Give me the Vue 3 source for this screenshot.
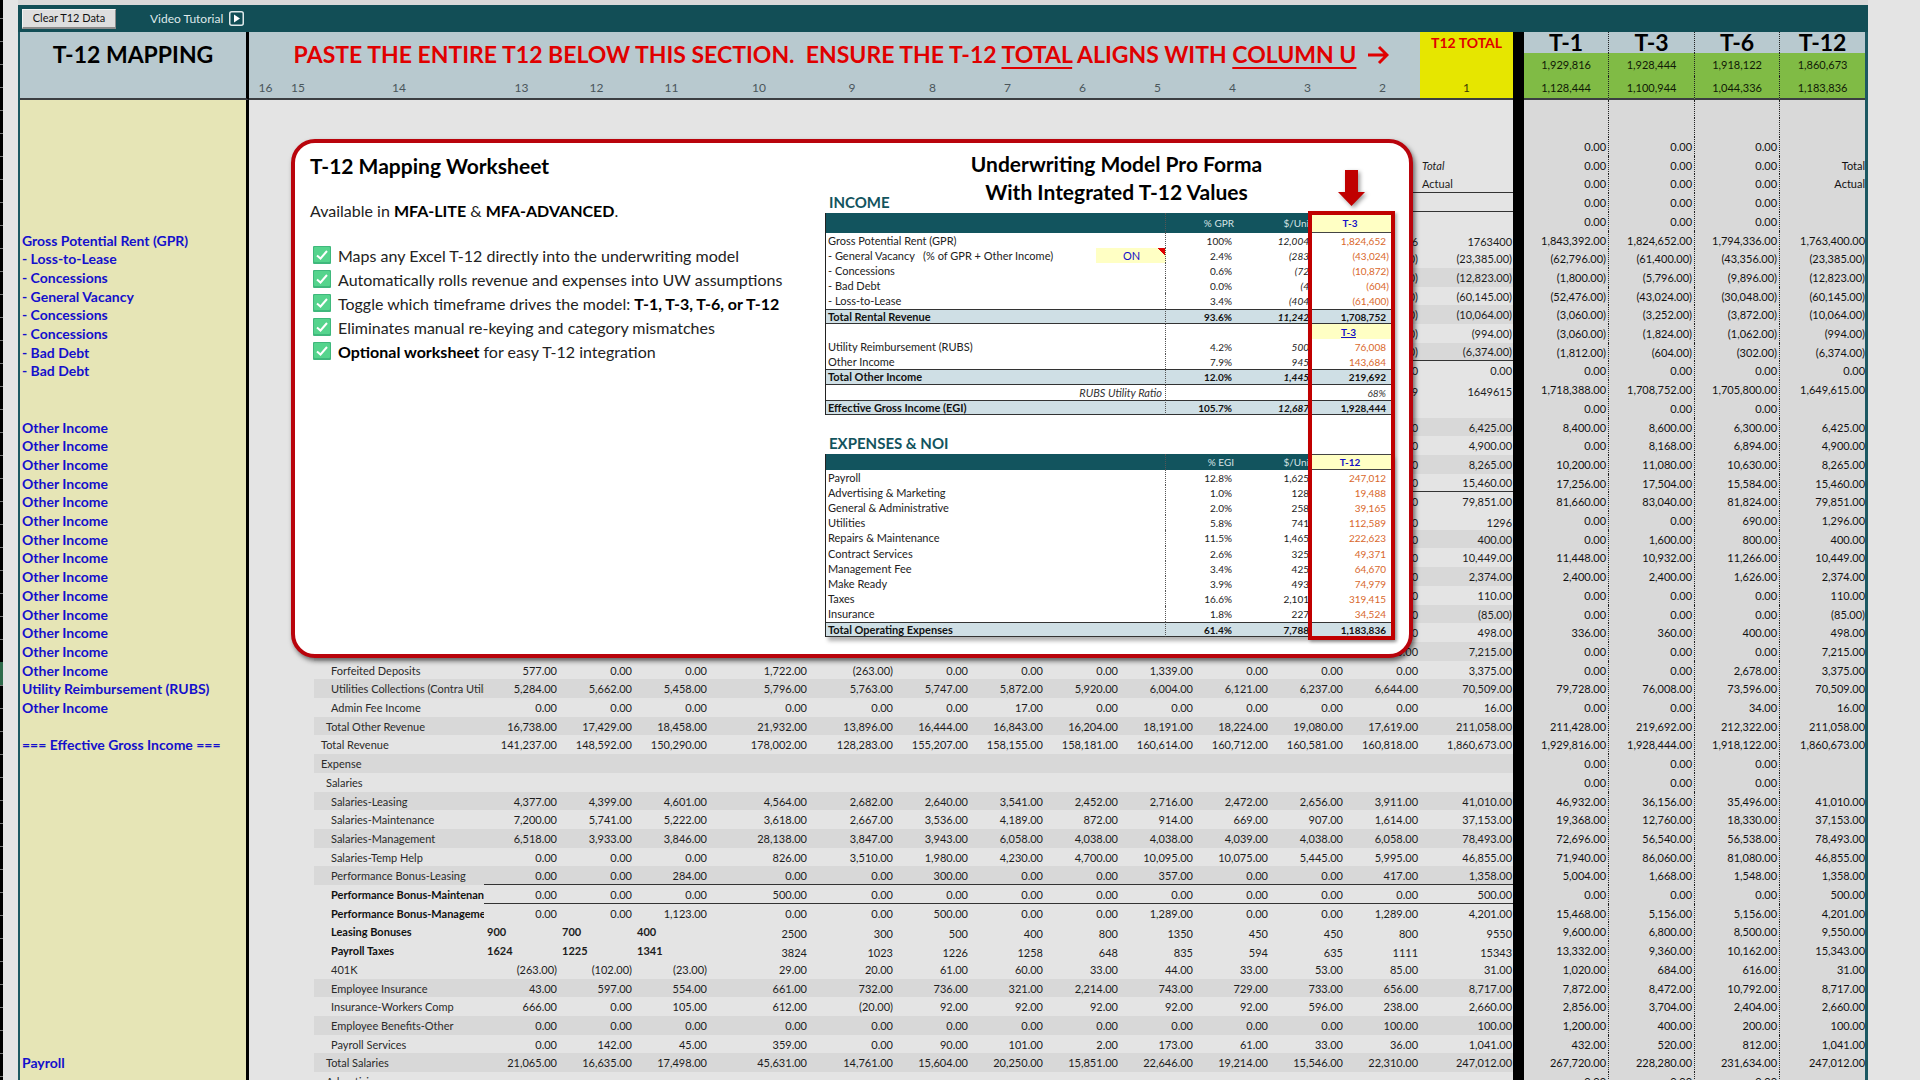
<!-- App.vue -->
<template>
  <div class="page">
    <div class="ruler"><span class="ruler-mark"></span></div>

    <main class="workbook">
      <div class="toolbar">
        <button type="button" class="clear-btn">Clear T12 Data</button>
        <a href="#" class="video-link">
          Video Tutorial
          <svg width="15" height="15" viewBox="0 0 15 15">
            <rect x="0.75" y="0.75" width="13.5" height="13.5" rx="2" fill="none" stroke="#dfe9ea" stroke-width="1.5" />
            <path d="M5 3.5 L11 7.5 L5 11.5 Z" fill="#fff" />
          </svg>
        </a>
      </div>

      <table class="sheet">
        <colgroup>
          <col v-for="(w, i) in colWidths" :key="i" :style="{ width: w + 'px' }" />
        </colgroup>
        <thead>
          <tr class="head-top">
            <th rowspan="2" class="map-head">T-12 MAPPING</th>
            <th rowspan="2" colspan="15" class="paste-head">
              PASTE THE ENTIRE T12 BELOW THIS SECTION.&nbsp; ENSURE THE T-12 <u>TOTAL</u> ALIGNS WITH <u>COLUMN U</u>
              <svg width="21" height="20" viewBox="0 0 21 20">
                <path d="M0 10 H19 M11 2 L19 10 L11 18" fill="none" stroke="#e00000" stroke-width="3" />
              </svg>
            </th>
            <th class="total-head">T12 TOTAL</th>
            <th rowspan="3" class="divider"></th>
            <th v-for="p in periods" :key="p.name" class="period-head">{{ p.name }}</th>
          </tr>
          <tr class="head-mid">
            <th class="yellow"></th>
            <th v-for="p in periods" :key="p.name" class="green">{{ p.income }}</th>
          </tr>
          <tr class="head-low">
            <th class="map-head"></th>
            <th v-for="n in 15" :key="n" class="col-no">{{ 17 - n }}</th>
            <th class="yellow col-one">1</th>
            <th v-for="p in periods" :key="p.name" class="green">{{ p.expense }}</th>
          </tr>
        </thead>
        <tbody>
          <tr v-for="(row, r) in rows" :key="r" :class="{ band: row.band, ruled: row.ruled, low: row.low }">
            <td class="map">{{ row.map }}</td>
            <td></td>
            <td></td>
            <td class="label" :class="['indent-' + row.indent, { bold: row.bold }]">{{ row.label }}</td>
            <td v-for="(v, c) in row.values" :key="c" class="num" :class="{ lead: row.low && row.bold && c < 3 }">{{ v }}</td>
            <td class="num total" :class="{ note: row.note, italic: row.total === 'Total' }">{{ row.total }}</td>
            <td class="divider"></td>
            <td v-for="(v, c) in row.trailing" :key="'t' + c" class="trail">{{ v }}</td>
          </tr>
        </tbody>
      </table>
    </main>

    <section class="card">
      <div class="intro">
        <h2>T-12 Mapping Worksheet</h2>
        <p>Available in <b>MFA-LITE</b> &amp; <b>MFA-ADVANCED</b>.</p>
        <ul>
          <li v-for="(item, i) in features" :key="i">
            <svg width="18" height="18" viewBox="0 0 18 18">
              <rect width="18" height="18" rx="1" fill="#3fb87c" />
              <rect x="1" y="1" width="16" height="15" rx="1" fill="#55d48d" />
              <path d="M4 9.5 L7.5 12.5 L14 5" fill="none" stroke="#fff" stroke-width="2" />
            </svg>
            <span>{{ item.text }}<b>{{ item.strong }}</b>{{ item.after }}</span>
          </li>
        </ul>
      </div>

      <div class="proforma">
        <h2>Underwriting Model Pro Forma<br />With Integrated T-12 Values</h2>
        <div class="statements">
          <template v-for="s in statements" :key="s.title">
            <h3>{{ s.title }}</h3>
            <table class="statement" :class="s.cls">
              <colgroup>
                <col /><col class="c-toggle" /><col class="c-pct" /><col class="c-unit" /><col class="c-value" />
              </colgroup>
              <thead>
                <tr>
                  <th colspan="2" class="name"></th>
                  <th>{{ s.pct }}</th>
                  <th class="unit">$/Uni</th>
                  <th class="picked">{{ s.period }}</th>
                </tr>
              </thead>
              <tbody>
                <tr v-for="(l, i) in s.lines" :key="i" :class="l.kind">
                  <td v-if="l.toggle" class="title">{{ l.name }}</td>
                  <td v-if="l.toggle" class="name toggle">ON</td>
                  <td v-else colspan="2" class="name title">{{ l.name }}</td>
                  <td class="pct">{{ l.pct }}</td>
                  <td class="unit" :class="{ slanted: s.slanted }">{{ l.unit }}</td>
                  <td class="value" :class="{ paren: l.value.startsWith('(') }">{{ l.value }}</td>
                </tr>
              </tbody>
            </table>
          </template>
          <div class="highlight"></div>
          <svg class="arrow" width="27" height="36" viewBox="0 0 27 36">
            <path d="M7 0 H20 V22 H27 L13.5 36 L0 22 H7 Z" fill="#c00000" />
          </svg>
        </div>
      </div>
    </section>
  </div>
</template>

<script setup>
const colWidths = [229, 33, 32, 170, 75, 75, 75, 100, 86, 75, 75, 75, 75, 75, 75, 75, 93, 11, 85, 86, 85, 85]

const periods = [
  { name: 'T-1', income: '1,929,816', expense: '1,128,444' },
  { name: 'T-3', income: '1,928,444', expense: '1,100,944' },
  { name: 'T-6', income: '1,918,122', expense: '1,044,336' },
  { name: 'T-12', income: '1,860,673', expense: '1,183,836' }
]

// mapping | indent | label | columns 13..2 | total | T-1 T-3 T-6 T-12 | flags
// flags: d = shaded band, u = rule below, l = bottom aligned, b = bold label, n = left aligned note
const source = `
|||||
|||||
||||| 0.00 0.00 0.00|
||||Total| 0.00 0.00 0.00 Total|n
||||Actual| 0.00 0.00 0.00 Actual|nu
||||| 0.00 0.00 0.00|u
||||| 0.00 0.00 0.00|
Gross Potential Rent (GPR)|||6|1763400|1,843,392.00 1,824,652.00 1,794,336.00 1,763,400.00|l
- Loss-to-Lease|||(0.00)|(23,385.00)|(62,796.00) (61,400.00) (43,356.00) (23,385.00)|
- Concessions|||(0.00)|(12,823.00)|(1,800.00) (5,796.00) (9,896.00) (12,823.00)|d
- General Vacancy|||(0.00)|(60,145.00)|(52,476.00) (43,024.00) (30,048.00) (60,145.00)|
- Concessions|||(0.00)|(10,064.00)|(3,060.00) (3,252.00) (3,872.00) (10,064.00)|d
- Concessions|||(0.00)|(994.00)|(3,060.00) (1,824.00) (1,062.00) (994.00)|
- Bad Debt|||(0.00)|(6,374.00)|(1,812.00) (604.00) (302.00) (6,374.00)|du
- Bad Debt|||0.00|0.00|0.00 0.00 0.00 0.00|
|||9|1649615|1,718,388.00 1,708,752.00 1,705,800.00 1,649,615.00|l
||||| 0.00 0.00 0.00|
Other Income|||0.00|6,425.00|8,400.00 8,600.00 6,300.00 6,425.00|d
Other Income|||0.00|4,900.00|0.00 8,168.00 6,894.00 4,900.00|
Other Income|||0.00|8,265.00|10,200.00 11,080.00 10,630.00 8,265.00|d
Other Income|||0.00|15,460.00|17,256.00 17,504.00 15,584.00 15,460.00|u
Other Income|||0.00|79,851.00|81,660.00 83,040.00 81,824.00 79,851.00|
Other Income|||0|1296|0.00 0.00 690.00 1,296.00|l
Other Income|||0.00|400.00|0.00 1,600.00 800.00 400.00|d
Other Income|||0.00|10,449.00|11,448.00 10,932.00 11,266.00 10,449.00|
Other Income|||0.00|2,374.00|2,400.00 2,400.00 1,626.00 2,374.00|d
Other Income|||0.00|110.00|0.00 0.00 0.00 110.00|
Other Income|||0.00|(85.00)|0.00 0.00 0.00 (85.00)|d
Other Income|||0.00|498.00|336.00 360.00 400.00 498.00|
Other Income|||0.00|7,215.00|0.00 0.00 0.00 7,215.00|d
Other Income|2|Forfeited Deposits|577.00 0.00 0.00 1,722.00 (263.00) 0.00 0.00 0.00 1,339.00 0.00 0.00 0.00|3,375.00|0.00 0.00 2,678.00 3,375.00|
Utility Reimbursement (RUBS)|2|Utilities Collections (Contra Utilities)|5,284.00 5,662.00 5,458.00 5,796.00 5,763.00 5,747.00 5,872.00 5,920.00 6,004.00 6,121.00 6,237.00 6,644.00|70,509.00|79,728.00 76,008.00 73,596.00 70,509.00|d
Other Income|2|Admin Fee Income|0.00 0.00 0.00 0.00 0.00 0.00 17.00 0.00 0.00 0.00 0.00 0.00|16.00|0.00 0.00 34.00 16.00|
|1|Total Other Revenue|16,738.00 17,429.00 18,458.00 21,932.00 13,896.00 16,444.00 16,843.00 16,204.00 18,191.00 18,224.00 19,080.00 17,619.00|211,058.00|211,428.00 219,692.00 212,322.00 211,058.00|d
=== Effective Gross Income ===|0|Total Revenue|141,237.00 148,592.00 150,290.00 178,002.00 128,283.00 155,207.00 158,155.00 158,181.00 160,614.00 160,712.00 160,581.00 160,818.00|1,860,673.00|1,929,816.00 1,928,444.00 1,918,122.00 1,860,673.00|
|0|Expense||| 0.00 0.00 0.00|d
|1|Salaries||| 0.00 0.00 0.00|
|2|Salaries-Leasing|4,377.00 4,399.00 4,601.00 4,564.00 2,682.00 2,640.00 3,541.00 2,452.00 2,716.00 2,472.00 2,656.00 3,911.00|41,010.00|46,932.00 36,156.00 35,496.00 41,010.00|d
|2|Salaries-Maintenance|7,200.00 5,741.00 5,222.00 3,618.00 2,667.00 3,536.00 4,189.00 872.00 914.00 669.00 907.00 1,614.00|37,153.00|19,368.00 12,760.00 18,330.00 37,153.00|
|2|Salaries-Management|6,518.00 3,933.00 3,846.00 28,138.00 3,847.00 3,943.00 6,058.00 4,038.00 4,038.00 4,039.00 4,038.00 6,058.00|78,493.00|72,696.00 56,540.00 56,538.00 78,493.00|d
|2|Salaries-Temp Help|0.00 0.00 0.00 826.00 3,510.00 1,980.00 4,230.00 4,700.00 10,095.00 10,075.00 5,445.00 5,995.00|46,855.00|71,940.00 86,060.00 81,080.00 46,855.00|
|2|Performance Bonus-Leasing|0.00 0.00 284.00 0.00 0.00 300.00 0.00 0.00 357.00 0.00 0.00 417.00|1,358.00|5,004.00 1,668.00 1,548.00 1,358.00|du
|2|Performance Bonus-Maintenance|0.00 0.00 0.00 500.00 0.00 0.00 0.00 0.00 0.00 0.00 0.00 0.00|500.00|0.00 0.00 0.00 500.00|ub
|2|Performance Bonus-Management|0.00 0.00 1,123.00 0.00 0.00 500.00 0.00 0.00 1,289.00 0.00 0.00 1,289.00|4,201.00|15,468.00 5,156.00 5,156.00 4,201.00|b
|2|Leasing Bonuses|900 700 400 2500 300 500 400 800 1350 450 450 800|9550|9,600.00 6,800.00 8,500.00 9,550.00|lb
|2|Payroll Taxes|1624 1225 1341 3824 1023 1226 1258 648 835 594 635 1111|15343|13,332.00 9,360.00 10,162.00 15,343.00|lb
|2|401K|(263.00) (102.00) (23.00) 29.00 20.00 61.00 60.00 33.00 44.00 33.00 53.00 85.00|31.00|1,020.00 684.00 616.00 31.00|
|2|Employee Insurance|43.00 597.00 554.00 661.00 732.00 736.00 321.00 2,214.00 743.00 729.00 733.00 656.00|8,717.00|7,872.00 8,472.00 10,792.00 8,717.00|d
|2|Insurance-Workers Comp|666.00 0.00 105.00 612.00 (20.00) 92.00 92.00 92.00 92.00 92.00 596.00 238.00|2,660.00|2,856.00 3,704.00 2,404.00 2,660.00|
|2|Employee Benefits-Other|0.00 0.00 0.00 0.00 0.00 0.00 0.00 0.00 0.00 0.00 0.00 100.00|100.00|1,200.00 400.00 200.00 100.00|d
|2|Payroll Services|0.00 142.00 45.00 359.00 0.00 90.00 101.00 2.00 173.00 61.00 33.00 36.00|1,041.00|432.00 520.00 812.00 1,041.00|
Payroll|1|Total Salaries|21,065.00 16,635.00 17,498.00 45,631.00 14,761.00 15,604.00 20,250.00 15,851.00 22,646.00 19,214.00 15,546.00 22,310.00|247,012.00|267,720.00 228,280.00 231,634.00 247,012.00|d
|1|Advertising||| 0.00 0.00 0.00|
`

const split = (text) => text.trim().split(' ').filter(Boolean)

const rows = source.trim().split('\n').map((line) => {
  const [map, indent, label, values, total, trailing, flags = ''] = line.split('|')
  const cells = split(values)
  const periodCells = split(trailing)
  return {
    map,
    indent: indent || 0,
    label,
    values: [...Array(12 - cells.length).fill(''), ...cells],
    total,
    trailing: [...periodCells, ...Array(4 - periodCells.length).fill('')],
    band: flags.includes('d'),
    ruled: flags.includes('u'),
    low: flags.includes('l'),
    bold: flags.includes('b'),
    note: flags.includes('n')
  }
})

const features = [
  { text: 'Maps any Excel T-12 directly into the underwriting model' },
  { text: 'Automatically rolls revenue and expenses into UW assumptions' },
  { text: 'Toggle which timeframe drives the model: ', strong: 'T-1, T-3, T-6, or T-12' },
  { text: 'Eliminates manual re-keying and category mismatches' },
  { strong: 'Optional worksheet', after: ' for easy T-12 integration' }
]

const statements = [
  {
    title: 'INCOME',
    cls: 'income',
    pct: '% GPR',
    period: 'T-3',
    slanted: true,
    lines: [
      { name: 'Gross Potential Rent (GPR)', pct: '100%', unit: '12,004', value: '1,824,652' },
      { name: '- General Vacancy \u00a0 (% of GPR + Other Income)', toggle: true, pct: '2.4%', unit: '(283', value: '(43,024)' },
      { name: '- Concessions', pct: '0.6%', unit: '(72', value: '(10,872)' },
      { name: '- Bad Debt', pct: '0.0%', unit: '(4', value: '(604)' },
      { name: '- Loss-to-Lease', pct: '3.4%', unit: '(404', value: '(61,400)' },
      { name: 'Total Rental Revenue', pct: '93.6%', unit: '11,242', value: '1,708,752', kind: 'sum' },
      { name: '', pct: '', unit: '', value: 'T-3', kind: 'switch' },
      { name: 'Utility Reimbursement (RUBS)', pct: '4.2%', unit: '500', value: '76,008' },
      { name: 'Other Income', pct: '7.9%', unit: '945', value: '143,684' },
      { name: 'Total Other Income', pct: '12.0%', unit: '1,445', value: '219,692', kind: 'sum' },
      { name: 'RUBS Utility Ratio', pct: '', unit: '', value: '68%', kind: 'ratio' },
      { name: 'Effective Gross Income (EGI)', pct: '105.7%', unit: '12,687', value: '1,928,444', kind: 'sum' }
    ]
  },
  {
    title: 'EXPENSES & NOI',
    cls: 'expenses',
    pct: '% EGI',
    period: 'T-12',
    slanted: false,
    lines: [
      { name: 'Payroll', pct: '12.8%', unit: '1,625', value: '247,012' },
      { name: 'Advertising & Marketing', pct: '1.0%', unit: '128', value: '19,488' },
      { name: 'General & Administrative', pct: '2.0%', unit: '258', value: '39,165' },
      { name: 'Utilities', pct: '5.8%', unit: '741', value: '112,589' },
      { name: 'Repairs & Maintenance', pct: '11.5%', unit: '1,465', value: '222,623' },
      { name: 'Contract Services', pct: '2.6%', unit: '325', value: '49,371' },
      { name: 'Management Fee', pct: '3.4%', unit: '425', value: '64,670' },
      { name: 'Make Ready', pct: '3.9%', unit: '493', value: '74,979' },
      { name: 'Taxes', pct: '16.6%', unit: '2,101', value: '319,415' },
      { name: 'Insurance', pct: '1.8%', unit: '227', value: '34,524' },
      { name: 'Total Operating Expenses', pct: '61.4%', unit: '7,788', value: '1,183,836', kind: 'sum' }
    ]
  }
]
</script>

<style>
body {
  margin: 0;
  background: #e4e4e4;
}
</style>

<style scoped>
.page {
  position: relative;
  display: flex;
  height: 100vh;
  overflow: hidden;
  background: #e4e4e4;
  color: #1c1c1c;
  font-family: Lato, "Open Sans", sans-serif;
  font-size: 11px;
}

.ruler {
  position: relative;
  flex: 0 0 3px;
  margin-right: 15px;
  background: repeating-linear-gradient(#000 0 18px, #777 18px 19px, #000 19px 23px);
}

.ruler-mark {
  position: absolute;
  top: 662px;
  left: 0;
  width: 3px;
  height: 23px;
  background: #2f6b4b;
}

.workbook {
  flex: 1;
  align-self: flex-start;
  margin-right: 52px;
  border-top: 5px solid #d9d9d9;
}

.toolbar {
  display: flex;
  align-items: center;
  gap: 34px;
  height: 27px;
  padding-left: 4px;
  background: #124e56;
}

.clear-btn {
  width: 94px;
  height: 20px;
  padding: 0;
  border: 1px solid #f2f2f2;
  border-right-color: #8c8c8c;
  border-bottom: 2px solid #8c8c8c;
  background: #dedede;
  color: #111;
  font: 11px/16px Lato, sans-serif;
}

.video-link {
  display: flex;
  align-items: center;
  gap: 6px;
  color: #dfe9ea;
  font-size: 12px;
  text-decoration: none;
}

.sheet {
  width: 100%;
  table-layout: fixed;
  border-collapse: separate;
  border-spacing: 0;
  border-left: 2px solid #1c5862;
  border-right: 3px solid #1c5862;
}

.sheet th,
.sheet td {
  box-sizing: border-box;
  padding: 0;
  white-space: nowrap;
}

.sheet th {
  background: #b8c9cf;
  font-size: 11px;
  font-weight: 400;
}

.head-top th {
  height: 21px;
}

.head-mid th {
  height: 23px;
}

.head-low th {
  height: 24px;
  border-bottom: 2px solid #3b3e42;
}

.sheet .map-head {
  border-right: 3px solid #000;
  color: #000;
  font-size: 23px;
  font-weight: 700;
}

.sheet .paste-head {
  padding-left: 14px;
  color: #e00000;
  font-size: 23px;
  font-weight: 700;
  line-height: 24px;
}

.paste-head u {
  text-decoration-thickness: 2px;
  text-underline-offset: 4px;
}

.paste-head svg {
  margin-left: 12px;
  vertical-align: -2px;
}

.sheet .total-head {
  background: #e6e600;
  color: #e00000;
  font-size: 14px;
  font-weight: 700;
}

.sheet .yellow {
  background: #e6e600;
}

.sheet .col-no {
  color: #4a565b;
  font-size: 12px;
}

.sheet .col-one {
  color: #3c3c00;
  font-size: 12px;
}

.sheet .period-head {
  border-right: 1px dotted #222;
  color: #000;
  font-size: 23px;
  font-weight: 700;
  line-height: 21px;
}

.sheet .green {
  border-right: 1px dotted #222;
  background: #80bb45;
  color: #101a06;
}

.sheet .divider {
  background: #000;
}

.sheet tbody td {
  height: 19px;
  line-height: 15px;
}

.sheet tbody tr:nth-child(10n + 1) td,
.sheet tbody tr:nth-child(10n + 4) td,
.sheet tbody tr:nth-child(10n + 8) td {
  height: 18px;
}

.sheet .map {
  padding-left: 2px;
  border-right: 3px solid #000;
  background: #e6e5b6;
  color: #1410cc;
  font-size: 14px;
  font-weight: 700;
}

.sheet .label {
  overflow: hidden;
  color: #2a2a2a;
}

.sheet .indent-0 {
  padding-left: 7px;
}

.sheet .indent-1 {
  padding-left: 12px;
}

.sheet .indent-2 {
  padding-left: 17px;
}

.sheet .bold {
  color: #111;
  font-weight: 700;
}

.sheet .num {
  padding-right: 2px;
  text-align: right;
}

.sheet .total {
  padding-right: 1px;
}

.band .label,
.band .num {
  background: #d8d8d8;
}

.ruled .num {
  border-bottom: 1px solid #333;
}

.low .num {
  vertical-align: bottom;
}

.sheet .lead {
  padding-left: 3px;
  font-weight: 700;
  text-align: left;
  vertical-align: middle;
}

.sheet .note {
  padding-left: 2px;
  text-align: left;
}

.italic {
  font-style: italic;
}

.sheet .trail {
  padding-right: 2px;
  border-right: 1px dotted #222;
  background: #d9d9d9;
  color: #111;
  text-align: right;
}

.sheet tr > :last-child {
  padding-right: 0;
  border-right: 0;
}

.card {
  position: absolute;
  top: 139px;
  left: 291px;
  right: 507px;
  display: flex;
  justify-content: space-between;
  box-sizing: border-box;
  min-height: 519px;
  padding: 7px 17px 12px 15px;
  border: 4px solid #b9040c;
  border-radius: 24px;
  background: #fff;
  box-shadow: 2px 3px 5px rgba(0, 0, 0, 0.55);
  color: #222;
}

.card h2,
.card h3,
.card p,
.card ul {
  margin: 0;
  padding: 0;
}

.card h2 {
  color: #000;
  font-size: 21px;
  line-height: 28px;
}

.intro {
  padding-top: 2px;
  font-size: 16px;
}

.intro p {
  margin-top: 19px;
  line-height: 24px;
}

.intro b {
  color: #000;
}

.card ul {
  margin-top: 20px;
  padding-left: 3px;
  list-style: none;
}

.intro li {
  display: flex;
  align-items: center;
  gap: 7px;
  height: 24px;
}

.proforma {
  width: 567px;
}

.proforma h2 {
  padding-left: 16px;
  text-align: center;
}

.statements {
  position: relative;
  margin-top: -15px;
}

.card h3 {
  padding-left: 4px;
  color: #12545e;
  font-size: 15px;
  line-height: 22px;
}

.card .income + h3 {
  margin-top: 17px;
}

.statement {
  width: 100%;
  table-layout: fixed;
  border-collapse: separate;
  border-spacing: 0;
  border-left: 1px solid #222;
  font-size: 10px;
}

.c-toggle {
  width: 70px;
}

.c-pct {
  width: 71px;
}

.c-unit {
  width: 72px;
}

.c-value {
  width: 83px;
}

.statement th,
.statement td {
  box-sizing: border-box;
  height: 15px;
  padding: 0 0 0 2px;
  line-height: 12px;
  white-space: nowrap;
}

.statement tbody tr:nth-child(5n) td {
  height: 16px;
}

.statement th {
  height: 16px;
  padding-right: 3px;
  background: #12545e;
  color: #d5e3e5;
  font-weight: 400;
  text-align: right;
}

.income th {
  height: 20px;
}

.statement .title {
  font-size: 11px;
}

.statement .name {
  border-right: 1px dotted #555;
}

.statement .toggle {
  background: linear-gradient(225deg, #e00000 5px, #ffffc4 5px);
  color: #1410c8;
  font-size: 11px;
  text-align: center;
}

.statement .picked {
  border: 1px solid #444;
  background: #ffffc4;
  color: #1410c8;
  font-weight: 700;
  text-align: center;
}

.statement .pct {
  padding-right: 5px;
  text-align: right;
}

.statement .unit {
  padding-right: 0;
  text-align: right;
}

.slanted {
  font-style: italic;
}

.statement .value {
  padding-right: 6px;
  color: #d9682c;
  text-align: right;
}

.statement .paren {
  padding-right: 3px;
}

.statement .sum td {
  border-top: 1px solid #333;
  border-bottom: 1px solid #333;
  background: #cfdfe5;
  color: #111;
  font-weight: 700;
}

.statement .switch .value {
  background: #ffffc4;
  color: #1410c8;
  font-weight: 700;
  text-align: center;
  text-decoration: underline;
}

.statement .ratio td {
  color: #333;
  font-style: italic;
  text-align: right;
}

.statement .ratio .name {
  padding-right: 3px;
}

.expenses {
  box-shadow: 3px 4px 4px rgba(0, 0, 0, 0.3);
}

.highlight {
  position: absolute;
  top: 20px;
  right: -3px;
  bottom: -3px;
  box-sizing: border-box;
  width: 87px;
  border: 4px solid #c00000;
  box-shadow: 2px 2px 3px rgba(0, 0, 0, 0.3);
}

.arrow {
  position: absolute;
  top: -21px;
  right: 27px;
  filter: drop-shadow(2px 2px 2px rgba(0, 0, 0, 0.4));
}
</style>
